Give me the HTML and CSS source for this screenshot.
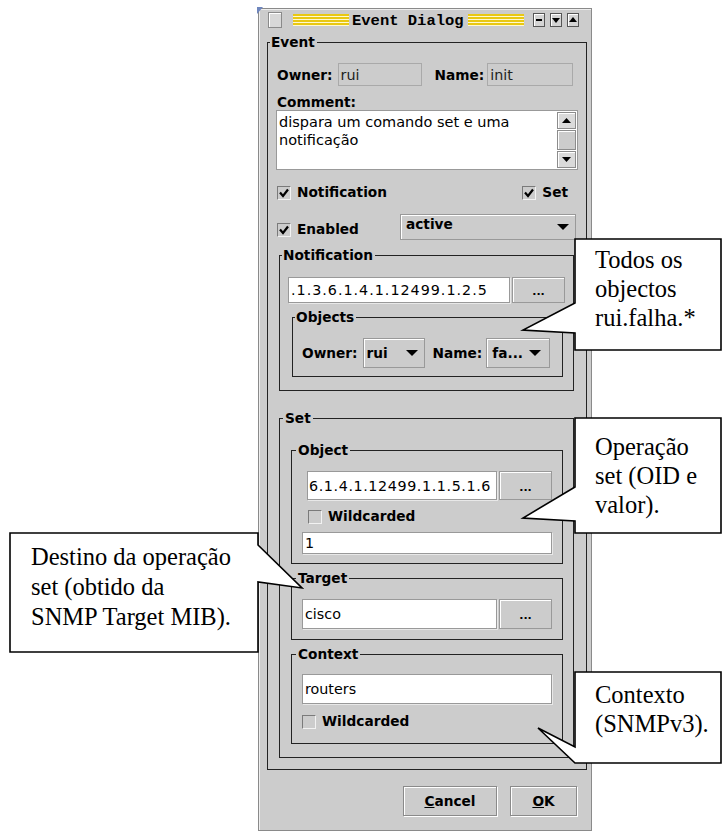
FILE: index.html
```html
<!DOCTYPE html>
<html lang="pt">

<head>
    <meta charset="UTF-8">
    <title>Event Dialog</title>
    <link rel="stylesheet" href="styles.css">
</head>

<body>
    <div class="window">
        <span class="corner"></span>
        <div class="titlebar">
            <span class="tb-menu"></span>
            <span class="stripes first"></span>
            <span class="title">Event Dialog</span>
            <span class="stripes"></span>
            <span class="tb-btn first">
                <svg width="8" height="8" viewBox="0 0 8 8"><rect x="1" y="3" width="6" height="2"/></svg>
            </span>
            <span class="tb-btn">
                <svg width="8" height="8" viewBox="0 0 8 8"><polygon points="0,2 8,2 4,7"/></svg>
            </span>
            <span class="tb-btn">
                <svg width="8" height="8" viewBox="0 0 8 8"><polygon points="0,6 8,6 4,1"/></svg>
            </span>
        </div>

        <fieldset class="frame event">
            <legend>Event</legend>
            <div class="event-body">
                <div class="row owner-row">
                    <span class="lbl">Owner:</span>
                    <span class="field ro owner-field">rui</span>
                    <span class="lbl name-lbl">Name:</span>
                    <span class="field ro name-field">init</span>
                </div>
                <div class="lbl comment-lbl">Comment:</div>
                <div class="textarea">
                    <div class="ta-text">dispara um comando set e uma<br>notificação</div>
                    <div class="scrollbar">
                        <span class="sb-btn"><svg width="9" height="5" viewBox="0 0 9 5"><polygon points="4.5,0 9,5 0,5"/></svg></span>
                        <span class="sb-thumb"></span>
                        <span class="sb-btn"><svg width="9" height="5" viewBox="0 0 9 5"><polygon points="0,0 9,0 4.5,5"/></svg></span>
                    </div>
                </div>
                <div class="row check-row">
                    <span class="check"><span class="box"><svg width="12" height="12" viewBox="0 0 12 12"><path d="M2 5.5 L5 9 L10 2.5"/></svg></span>Notification</span>
                    <span class="check"><span class="box"><svg width="12" height="12" viewBox="0 0 12 12"><path d="M2 5.5 L5 9 L10 2.5"/></svg></span>Set</span>
                </div>
                <div class="row enabled-row">
                    <span class="check"><span class="box"><svg width="12" height="12" viewBox="0 0 12 12"><path d="M2 5.5 L5 9 L10 2.5"/></svg></span>Enabled</span>
                    <span class="combo status-combo">active<svg width="12" height="6" viewBox="0 0 12 6"><polygon points="0,0 12,0 6,6"/></svg></span>
                </div>
            </div>

            <fieldset class="frame group notif">
                <legend>Notification</legend>
                <div class="row oid-row">
                    <span class="field notif-oid oid">.1.3.6.1.4.1.12499.1.2.5</span>
                    <span class="dots">...</span>
                </div>
                <fieldset class="frame inner objects">
                    <legend>Objects</legend>
                    <div class="row objects-row">
                        <span class="lbl">Owner:</span>
                        <span class="combo small-combo rui-combo">rui<svg width="12" height="6" viewBox="0 0 12 6"><polygon points="0,0 12,0 6,6"/></svg></span>
                        <span class="lbl obj-name-lbl">Name:</span>
                        <span class="combo small-combo fa-combo">fa...<svg width="12" height="6" viewBox="0 0 12 6"><polygon points="0,0 12,0 6,6"/></svg></span>
                    </div>
                </fieldset>
            </fieldset>

            <fieldset class="frame group set">
                <legend>Set</legend>
                <fieldset class="frame inner object">
                    <legend>Object</legend>
                    <div class="row oid-row object-oid-row">
                        <span class="field object-oid">6.1.4.1.12499.1.1.5.1.6</span>
                        <span class="dots">...</span>
                    </div>
                    <div class="row wild-row object-wild">
                        <span class="check"><span class="box"></span>Wildcarded</span>
                    </div>
                    <div class="row pad-row">
                        <span class="field value-field">1</span>
                    </div>
                </fieldset>
                <fieldset class="frame inner target">
                    <legend>Target</legend>
                    <div class="row pad-row target-row">
                        <span class="field target-field">cisco</span>
                        <span class="dots">...</span>
                    </div>
                </fieldset>
                <fieldset class="frame inner context">
                    <legend>Context</legend>
                    <div class="row pad-row context-row">
                        <span class="field context-field">routers</span>
                    </div>
                    <div class="row wild-row pad-row context-wild">
                        <span class="check"><span class="box"></span>Wildcarded</span>
                    </div>
                </fieldset>
            </fieldset>
        </fieldset>

        <div class="actions">
            <span class="btn cancel"><u>C</u>ancel</span>
            <span class="btn ok"><u>O</u>K</span>
        </div>
    </div>

    <svg class="callouts" width="723" height="835" viewBox="0 0 723 835">
        <polygon points="575,239 721,239 721,350 575,350 575,333 523,330 575,303"/>
        <polygon points="575,418 721,418 721,533 575,533 575,521 523,518 575,487"/>
        <polygon points="10,533 258,533 258,545 302,588 258,582 258,652 10,652"/>
        <polygon points="575,672 721,672 721,763 575,763 538,728 575,747"/>
    </svg>

    <div class="note note-todos">Todos os<br>objectos<br>rui.falha.*</div>
    <div class="note note-op">Operação<br>set (OID e<br>valor).</div>
    <div class="note note-dest">Destino da operação<br>set (obtido da<br>SNMP Target MIB).</div>
    <div class="note note-ctx">Contexto<br>(SNMPv3).</div>
</body>

</html>
```

FILE: styles.css
```css
body {
    margin: 0;
    width: 723px;
    height: 835px;
    position: relative;
    overflow: hidden;
    background-color: #ffffff;
    font-family: "DejaVu Sans", sans-serif;
    color: #000000;
}

/* window */
.window {
    position: relative;
    box-sizing: border-box;
    width: 334px;
    height: 823px;
    margin: 8px 0 0 258px;
    background-color: #cccccc;
    border: 1px solid #8a8a8a;
    box-shadow: inset 1px 1px 0 #eeeeee;
}

.corner {
    position: absolute;
    left: -2px;
    top: -2px;
    width: 0;
    height: 0;
    border-top: 7px solid #6f86bd;
    border-right: 6px solid transparent;
}

.titlebar {
    height: 22px;
    display: flex;
    align-items: center;
    padding-left: 9px;
}

.tb-menu {
    box-sizing: border-box;
    width: 14px;
    height: 16px;
    border: 1px solid #8a8a8a;
    background-color: #d8d8d8;
    box-shadow: inset 1px 1px 0 #ffffff;
}

.stripes {
    width: 56px;
    height: 12px;
    background: repeating-linear-gradient(#e9c812 0 2px, #fff9d0 2px 3px);
}

.stripes.first {
    margin-left: 11px;
}

.title {
    font: bold 15.5px/16px "Liberation Mono", monospace;
    margin: 2px 4px 0 3px;
    white-space: nowrap;
}

.tb-btn {
    box-sizing: border-box;
    width: 12px;
    height: 14px;
    margin-left: 5px;
    border: 1px solid #555555;
    background-color: #d4d4d4;
    box-shadow: inset 1px 1px 0 #ffffff;
    display: flex;
    align-items: center;
    justify-content: center;
}

.tb-btn.first {
    margin-left: 9px;
}

/* titled frames */
.frame {
    margin: 0;
    padding: 0;
    min-inline-size: 0;
    border: 1px solid #222222;
}

.frame legend {
    font: bold 13.7px/14px "DejaVu Sans", sans-serif;
    margin-left: 2px;
    padding: 0 2px 0 1px;
}

.event {
    width: 320px;
    box-sizing: border-box;
    margin: 4px 0 0 8px;
    padding-bottom: 11px;
}

.event-body {
    padding: 14px 8px 0 9px;
}

.row {
    display: flex;
    align-items: center;
}

.lbl {
    font-weight: bold;
    font-size: 13.7px;
    line-height: 14px;
    white-space: nowrap;
}

.field {
    box-sizing: border-box;
    display: flex;
    align-items: center;
    padding: 0 2px;
    border: 1px solid #999999;
    background-color: #ffffff;
    box-shadow: 1px 1px 0 #e8e8e8;
    font-size: 14.3px;
    white-space: nowrap;
    overflow: hidden;
}

.field.ro {
    background-color: #cccccc;
    border-color: #a9a9a9;
    box-shadow: none;
    color: #222222;
}

.owner-row {
    height: 23px;
}

.owner-row .lbl:first-child {
    margin-right: 5px;
}

.owner-field {
    width: 84px;
    height: 23px;
}

.name-lbl {
    margin: 0 3px 0 13px;
}

.name-field {
    width: 86px;
    height: 23px;
}

.comment-lbl {
    margin-top: 9px;
}

.textarea {
    box-sizing: border-box;
    display: flex;
    height: 60px;
    width: 302px;
    margin: 1px 0 0 -1px;
    border: 1px solid #999999;
    background-color: #ffffff;
}

.ta-text {
    flex: 1;
    padding: 2px 2px 0 2px;
    font-size: 14.5px;
    line-height: 18px;
    white-space: nowrap;
}

.scrollbar {
    width: 19px;
    display: flex;
    flex-direction: column;
    padding: 1px 1px 1px 0;
}

.sb-btn {
    box-sizing: border-box;
    height: 17px;
    border: 1px solid #8c8c8c;
    background-color: #dadada;
    box-shadow: inset 1px 1px 0 #ffffff;
    display: flex;
    align-items: center;
    justify-content: center;
}

.sb-thumb {
    flex: 1;
    margin: 1px 0;
    border: 1px solid #8c8c8c;
    background-color: #cccccc;
    box-shadow: inset 1px 1px 0 #ffffff;
}

.check {
    display: flex;
    align-items: center;
    font-weight: bold;
    font-size: 13.7px;
    line-height: 15px;
    white-space: nowrap;
}

.box {
    box-sizing: border-box;
    width: 14px;
    height: 14px;
    margin-right: 6px;
    border: 1px solid;
    border-color: #7a7a7a #f2f2f2 #f2f2f2 #7a7a7a;
    background-color: #cccccc;
    display: flex;
    align-items: center;
    justify-content: center;
}

.box path {
    fill: none;
    stroke: #000000;
    stroke-width: 2.2;
}

.check-row {
    height: 15px;
    margin-top: 15px;
    justify-content: space-between;
    padding-right: 10px;
}

.enabled-row {
    height: 26px;
    margin-top: 14px;
    justify-content: space-between;
    align-items: flex-end;
    padding-right: 2px;
}

.enabled-row .check {
    margin-bottom: 3px;
}

.combo {
    box-sizing: border-box;
    display: flex;
    align-items: center;
    justify-content: space-between;
    border: 1px solid #999999;
    background-color: #cccccc;
    box-shadow: inset 1px 1px 0 #ffffff;
    font-weight: bold;
    font-size: 13.7px;
    white-space: nowrap;
}

.status-combo {
    width: 176px;
    height: 26px;
    padding: 0 6px 7px 5px;
}

.status-combo svg {
    margin-top: 7px;
}

/* second level frames */
.group {
    margin: 8px 12px 0 11px;
    padding-bottom: 13px;
}

.oid-row {
    height: 26px;
    margin-top: 15px;
    padding-left: 8px;
}

.oid {
    letter-spacing: 1px;
}

.notif-oid {
    width: 222px;
    height: 26px;
}

.dots {
    box-sizing: border-box;
    width: 53px;
    height: 100%;
    margin-left: 2px;
    border: 1px solid #999999;
    background-color: #cccccc;
    box-shadow: inset 1px 1px 0 #ffffff;
    display: flex;
    align-items: center;
    justify-content: center;
    font-weight: bold;
    font-size: 11px;
    padding-top: 3px;
}

.inner {
    margin: 7px 10px 0 11px;
    padding-bottom: 9px;
}

.objects {
    margin-left: 12px;
    padding-bottom: 8px;
}

.objects-row {
    height: 30px;
    margin-top: 14px;
    padding-left: 9px;
}

.objects-row .lbl:first-child {
    margin-right: 5px;
}

.obj-name-lbl {
    margin: 0 4px 0 8px;
}

.small-combo {
    height: 30px;
    padding: 0 6px 0 3px;
}

.rui-combo {
    width: 62px;
}

.fa-combo {
    width: 64px;
    padding: 0 8px 0 5px;
}

/* set frame */
.set {
    margin-top: 20px;
}

.set legend {
    margin-left: 3px;
    padding-left: 2px;
}

.set .inner legend {
    margin-left: 4px;
    padding-left: 2px;
}

.object {
    margin-top: 18px;
}

.object-oid-row {
    height: 29px;
    margin-top: 14px;
    padding-left: 15px;
}

.object-oid {
    width: 190px;
    height: 29px;
    padding-left: 1px;
    letter-spacing: 0.6px;
}

.wild-row {
    height: 15px;
}

.object-wild {
    margin-top: 9px;
    padding-left: 16px;
}

.pad-row {
    padding-left: 10px;
}

.object .pad-row:last-child {
    margin-top: 8px;
}

.value-field {
    width: 250px;
    height: 22px;
}

.target {
    padding-bottom: 10px;
}

.target-row {
    height: 30px;
    margin-top: 14px;
}

.target-field {
    width: 195px;
    height: 30px;
}

.context {
    padding-bottom: 14px;
}

.context-row {
    margin-top: 13px;
}

.context-field {
    width: 250px;
    height: 30px;
}

.context-wild {
    margin-top: 10px;
}

/* dialog buttons */
.actions {
    display: flex;
    justify-content: flex-end;
    gap: 13px;
    margin-top: 16px;
    padding-right: 14px;
}

.btn {
    box-sizing: border-box;
    height: 30px;
    border: 1px solid #8a8a8a;
    background-color: #cccccc;
    box-shadow: inset 1px 1px 0 #ffffff, 1px 1px 0 #ffffff;
    display: flex;
    align-items: center;
    justify-content: center;
    font-weight: bold;
    font-size: 13.7px;
}

.cancel {
    width: 94px;
}

.ok {
    width: 67px;
}

/* annotation callouts */
.callouts {
    position: absolute;
    left: 0;
    top: 0;
}

.callouts polygon {
    fill: #ffffff;
    stroke: #000000;
    stroke-width: 1.6;
}

.note {
    position: absolute;
    font-family: "Liberation Serif", serif;
    font-size: 24.5px;
    line-height: 29px;
    white-space: nowrap;
}

.note-todos {
    left: 595px;
    top: 245px;
}

.note-op {
    left: 595px;
    top: 432px;
}

.note-dest {
    left: 31px;
    top: 542px;
    line-height: 30px;
}

.note-ctx {
    left: 595px;
    top: 680px;
}
```
